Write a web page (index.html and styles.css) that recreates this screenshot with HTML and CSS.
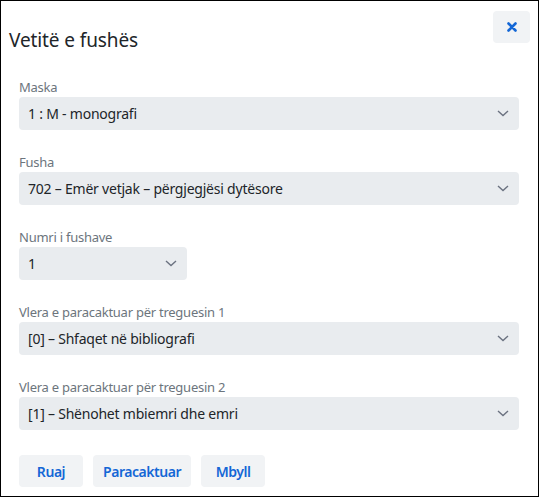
FILE: index.html
```html
<!DOCTYPE html>
<html lang="sq">
<head>
<meta charset="utf-8">
<title>Vetitë e fushës</title>
<link rel="stylesheet" href="styles.css">
</head>
<body>
<div class="dialog">
  <button class="close" type="button" aria-label="Mbyll">
    <svg width="10" height="10" viewBox="0 0 10 10"><path d="M1.5 1.5 L8.5 8.5 M8.5 1.5 L1.5 8.5" stroke="#1467d6" stroke-width="2.6" stroke-linecap="round" fill="none"/></svg>
  </button>
  <h1 class="title">Vetitë e fushës</h1>
  <form class="body">
    <div class="group">
      <label class="label">Maska</label>
      <div class="select">
        <span class="value">1 : M - monografi</span>
        <svg class="chev" width="12" height="7" viewBox="0 0 12 7"><path d="M1 1 L6 5.5 L11 1" stroke="#6b7280" stroke-width="1.4" fill="none"/></svg>
      </div>
    </div>
    <div class="group">
      <label class="label">Fusha</label>
      <div class="select">
        <span class="value">702 – Emër vetjak – përgjegjësi dytësore</span>
        <svg class="chev" width="12" height="7" viewBox="0 0 12 7"><path d="M1 1 L6 5.5 L11 1" stroke="#6b7280" stroke-width="1.4" fill="none"/></svg>
      </div>
    </div>
    <div class="group">
      <label class="label">Numri i fushave</label>
      <div class="select narrow">
        <span class="value">1</span>
        <svg class="chev" width="12" height="7" viewBox="0 0 12 7"><path d="M1 1 L6 5.5 L11 1" stroke="#6b7280" stroke-width="1.4" fill="none"/></svg>
      </div>
    </div>
    <div class="group">
      <label class="label">Vlera e paracaktuar për treguesin 1</label>
      <div class="select">
        <span class="value">[0] – Shfaqet në bibliografi</span>
        <svg class="chev" width="12" height="7" viewBox="0 0 12 7"><path d="M1 1 L6 5.5 L11 1" stroke="#6b7280" stroke-width="1.4" fill="none"/></svg>
      </div>
    </div>
    <div class="group">
      <label class="label">Vlera e paracaktuar për treguesin 2</label>
      <div class="select">
        <span class="value">[1] – Shënohet mbiemri dhe emri</span>
        <svg class="chev" width="12" height="7" viewBox="0 0 12 7"><path d="M1 1 L6 5.5 L11 1" stroke="#6b7280" stroke-width="1.4" fill="none"/></svg>
      </div>
    </div>
    <div class="actions">
      <button type="button" class="btn">Ruaj</button>
      <button type="button" class="btn">Paracaktuar</button>
      <button type="button" class="btn">Mbyll</button>
    </div>
  </form>
</div>
</body>
</html>
```
FILE: styles.css
```css
* { box-sizing: border-box; }
html, body { margin: 0; padding: 0; background: #fff; }
body {
  font-family: "Noto Sans", "Open Sans", sans-serif;
  color: #212529;
}
.dialog {
  position: relative;
  width: 539px;
  height: 497px;
  border: 1px solid #000;
  padding: 0 18px 0 18px;
}
.close {
  position: absolute;
  top: 10px;
  right: 8px;
  width: 37px;
  height: 32px;
  border: 0;
  border-radius: 4px;
  background: #f1f3f5;
  display: flex;
  align-items: center;
  justify-content: center;
  padding: 0;
}
.title {
  margin: 27px 0 0 -10px;
  font-size: 19px;
  line-height: 24px;
  font-weight: 400;
  color: #212529;
  letter-spacing: -0.1px;
}
.body {
  margin: 25px 0 0 0;
  display: flex;
  flex-direction: column;
}
.group {
  display: flex;
  flex-direction: column;
  margin-bottom: 22px;
}
.label {
  font-size: 13px;
  line-height: 20px;
  color: #6c757d;
  letter-spacing: -0.25px;
}
.select {
  position: relative;
  height: 33px;
  width: 500px;
  background: #e9ecef;
  border-radius: 4px;
  display: flex;
  align-items: center;
  padding-left: 9px;
  font-size: 14px;
  letter-spacing: -0.22px;
}
.select.narrow { width: 168px; }
.chev {
  position: absolute;
  right: 10px;
  top: 13px;
}
.actions {
  display: flex;
  gap: 10px;
  margin-top: 3px;
}
.btn {
  height: 32px;
  min-width: 64px;
  border: 0;
  border-radius: 4px;
  background: #f1f3f5;
  color: #1467d6;
  font-family: inherit;
  font-size: 14px;
  font-weight: 600;
  letter-spacing: -0.45px;
  padding: 0 10px;
}
```
